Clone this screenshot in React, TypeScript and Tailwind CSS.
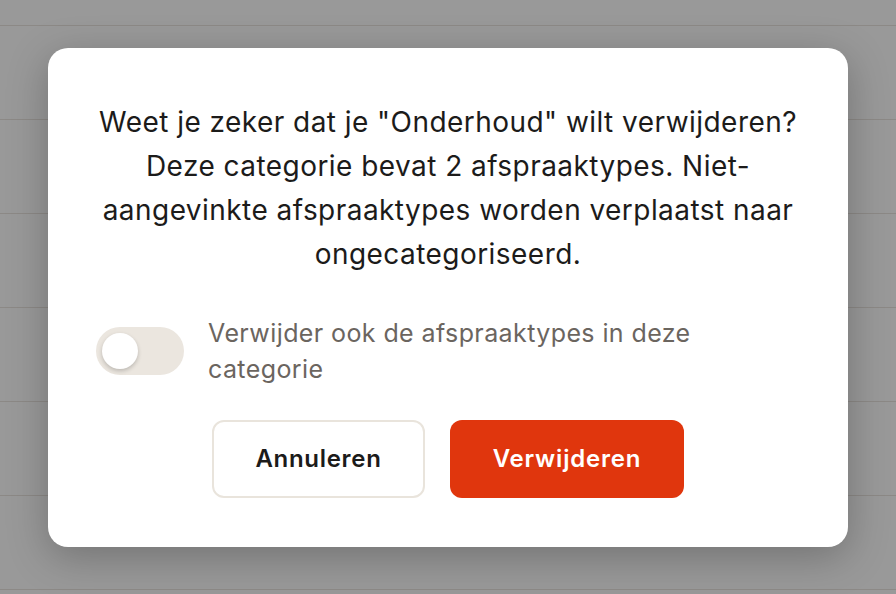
import { useState } from 'react';

const rows = Array.from({ length: 7 });

export default function App() {
  const [alsoDelete, setAlsoDelete] = useState(false);

  return (
    <div
      className="relative h-[594px] w-[896px] overflow-hidden bg-white"
      style={{ fontFamily: 'Inter, "Noto Sans", sans-serif' }}
    >
      {/* achtergrondlijst onder de overlay */}
      <div className="flex flex-col pt-[25px]">
        {rows.map((_, i) => (
          <div key={i} className="h-[94px] border-t border-[#e9e4df]" />
        ))}
      </div>

      {/* overlay + dialoog */}
      <div className="absolute inset-0 flex items-start justify-center bg-black/40 pt-12">
        <div className="flex w-[800px] flex-col rounded-[20px] bg-white px-12 pb-[49px] pt-[52px] shadow-[0_10px_40px_rgba(0,0,0,0.25)]">
          <p className="text-center text-[28px] leading-[44px] tracking-[0.45px] text-[#1c1b1a]">
            Weet je zeker dat je "Onderhoud" wilt verwijderen?
            <br />
            Deze categorie bevat 2 afspraaktypes. Niet-
            <br />
            aangevinkte afspraaktypes worden verplaatst naar
            <br />
            ongecategoriseerd.
          </p>

          <label className="mt-[39px] flex cursor-pointer items-center gap-6">
            <button
              type="button"
              role="switch"
              aria-checked={alsoDelete}
              onClick={() => setAlsoDelete(!alsoDelete)}
              className={
                'flex h-12 w-[88px] shrink-0 items-center rounded-full px-1.5 transition-colors ' +
                (alsoDelete ? 'bg-[#e0360d]' : 'bg-[#ebe6df]')
              }
            >
              <span
                className={
                  'h-9 w-9 rounded-full bg-white shadow-[0_2px_4px_rgba(0,0,0,0.2)] transition-transform ' +
                  (alsoDelete ? 'translate-x-10' : 'translate-x-0')
                }
              />
            </button>
            <span className="text-[25px] leading-9 tracking-[0.4px] text-[#6b655f]">
              Verwijder ook de afspraaktypes in deze
              <br />
              categorie
            </span>
          </label>

          <div className="mt-[33px] flex justify-center gap-[25px]">
            <button
              type="button"
              className="h-[78px] w-[213px] rounded-xl border-2 border-[#e9e4dc] bg-white text-[24px] font-semibold tracking-[0.7px] text-[#1c1b1a]"
            >
              Annuleren
            </button>
            <button
              type="button"
              className="h-[78px] w-[234px] rounded-xl bg-[#e0360d] text-[24px] font-semibold tracking-[0.8px] text-white"
            >
              Verwijderen
            </button>
          </div>
        </div>
      </div>
    </div>
  );
}
